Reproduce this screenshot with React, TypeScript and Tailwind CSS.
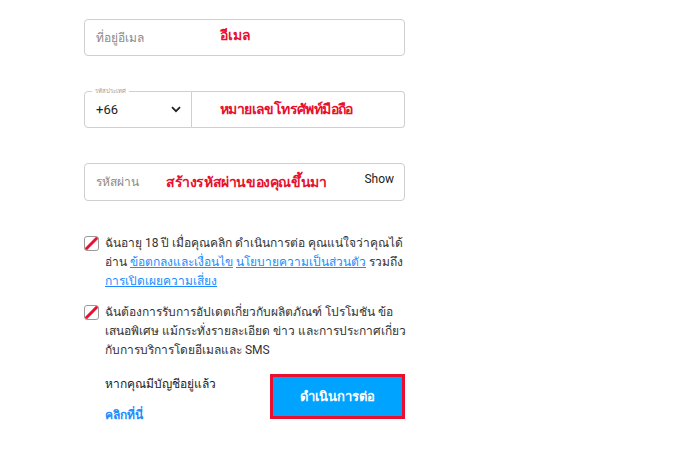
import React from 'react';

const CrossedBox = () => (
  <span className="relative mt-[2px] block h-[15px] w-[15px] shrink-0 overflow-hidden rounded-[3px] border border-[#9a9a9a] bg-white">
    <svg className="absolute -left-px -top-px h-[15px] w-[15px]" viewBox="0 0 15 15">
      <line x1="0" y1="15" x2="15" y2="0" stroke="#e8102e" strokeWidth="3" />
    </svg>
  </span>
);

const Chevron = () => (
  <svg width="10" height="7" viewBox="0 0 10 7">
    <path d="M1 1.2 L5 5.2 L9 1.2" fill="none" stroke="#222" strokeWidth="1.8" />
  </svg>
);

export default function App() {
  return (
    <div className="min-h-[456px] w-[700px] bg-white font-['Roboto','Noto_Sans',sans-serif] text-[12px] text-[#333]">
      <div className="ml-[84px] w-[321px] pt-[19px]">
        {/* email */}
        <div className="flex h-[37px] items-center rounded-[4px] border border-[#cfcfcf] px-[11px]">
          <span className="w-[124px] text-[#8a8a8a]">ที่อยู่อีเมล</span>
          <span className="-mt-[5px] text-[14px] font-bold text-[#e8102e]">อีเมล</span>
        </div>

        {/* phone */}
        <div className="mt-[35px] flex h-[37px]">
          <div className="relative flex w-[108px] items-center justify-between rounded-l-[4px] border border-[#cfcfcf] pl-[11px] pr-[10px]">
            <span className="absolute -top-[6px] left-[7px] bg-white px-[3px] text-[6px] leading-[10px] text-[#999]">รหัสประเทศ</span>
            <span className="text-[13px] text-[#222]">+66</span>
            <Chevron />
          </div>
          <div className="flex flex-1 items-center rounded-r-[4px] border border-l-0 border-[#cfcfcf] pl-[28px]">
            <span className="text-[14px] font-bold tracking-[-0.6px] text-[#e8102e]">หมายเลขโทรศัพท์มือถือ</span>
          </div>
        </div>

        {/* password */}
        <div className="mt-[35px] flex h-[38px] items-center rounded-[4px] border border-[#cfcfcf] pl-[11px] pr-[10px]">
          <span className="w-[70px] text-[#8a8a8a]">รหัสผ่าน</span>
          <span className="text-[14px] font-bold tracking-[-0.4px] text-[#e8102e]">สร้างรหัสผ่านของคุณขึ้นมา</span>
          <span className="ml-auto -mt-[6px] text-[12px] text-[#222]">Show</span>
        </div>

        {/* consent 1 */}
        <div className="mt-[33px] flex gap-[6px] leading-[19px]">
          <CrossedBox />
          <p>
            ฉันอายุ 18 ปี เมื่อคุณคลิก ดำเนินการต่อ คุณแน่ใจว่าคุณได้อ่าน{' '}
            <a className="text-[#1a8cff] underline">ข้อตกลงและเงื่อนไข</a>{' '}
            <a className="text-[#1a8cff] underline">นโยบายความเป็นส่วนตัว</a> รวมถึง{' '}
            <a className="text-[#1a8cff] underline">การเปิดเผยความเสี่ยง</a>
          </p>
        </div>

        {/* consent 2 */}
        <div className="mt-[12px] -mr-[8px] flex gap-[6px] leading-[19px]">
          <CrossedBox />
          <p>
            ฉันต้องการรับการอัปเดตเกี่ยวกับผลิตภัณฑ์ โปรโมชัน ข้อเสนอพิเศษ แม้กระทั่งรายละเอียด ข่าว และการประกาศเกี่ยวกับการบริการโดยอีเมลและ SMS
          </p>
        </div>

        {/* bottom row */}
        <div className="mt-[14px] flex justify-between pl-[21px]">
          <div className="flex flex-col pt-[1px]">
            <span className="text-[#222]">หากคุณมีบัญชีอยู่แล้ว</span>
            <a className="mt-[13px] font-bold text-[#1a8cff]">คลิกที่นี่</a>
          </div>
          <button className="flex h-[45px] w-[135px] items-center justify-center border-[3px] border-[#e8102e] bg-[#00a3ff] text-[13px] font-bold text-white">
            ดำเนินการต่อ
          </button>
        </div>
      </div>
    </div>
  );
}
